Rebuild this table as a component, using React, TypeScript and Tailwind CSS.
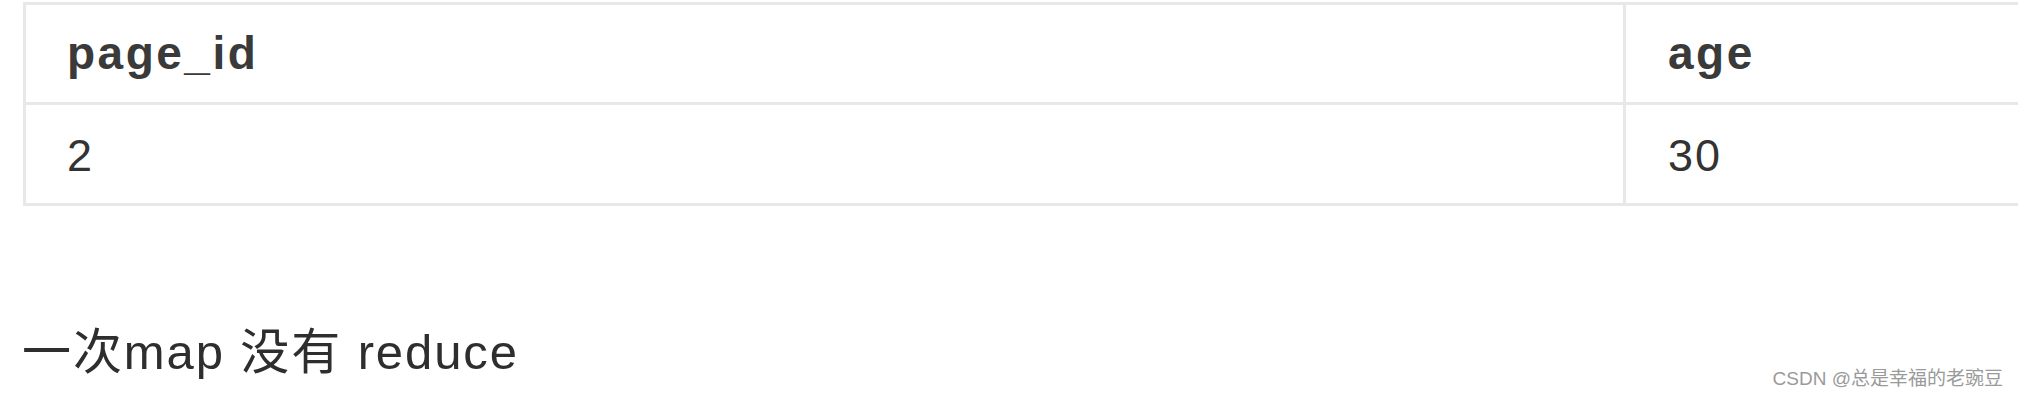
export default function App() {
  const latin = "font-['Liberation_Sans','Noto_Sans_CJK_SC',sans-serif]";

  return (
    <div className={`relative w-[2018px] h-[400px] overflow-hidden bg-white ${latin} text-[#333333]`}>
      <div className="pl-[23px] pt-[2px]">
        <div className="w-[2200px] border-l-[3px] border-t-[3px] border-b-[3px] border-[#e8e8e8]">
          <div className="grid grid-cols-[1600px_1fr] h-[100px] border-b-[3px] border-[#e8e8e8]">
            <div className="flex items-center pl-[41px] border-r-[3px] border-[#e8e8e8] text-[46px] font-bold tracking-[2.5px] text-[#3a3a3a]">
              page_id
            </div>
            <div className="flex items-center pl-[42px] text-[46px] font-bold tracking-[2.5px] text-[#3a3a3a]">
              age
            </div>
          </div>
          <div className="grid grid-cols-[1600px_1fr] h-[98px]">
            <div className="flex items-center pl-[41px] pt-[4px] border-r-[3px] border-[#e8e8e8] text-[45px] tracking-[2px]">
              2
            </div>
            <div className="flex items-center pl-[42px] pt-[4px] text-[45px] tracking-[2px]">
              30
            </div>
          </div>
        </div>
      </div>

      <p className="mt-[118px] pl-[22px] text-[49px] leading-[56px] tracking-[1.9px] text-[#2e2e2e]">
        一次map 没有 reduce
      </p>

      <span className="absolute right-[15px] bottom-[9px] text-[19px] leading-[24px] text-[#9a9a9a]">
        CSDN @总是幸福的老豌豆
      </span>
    </div>
  );
}
